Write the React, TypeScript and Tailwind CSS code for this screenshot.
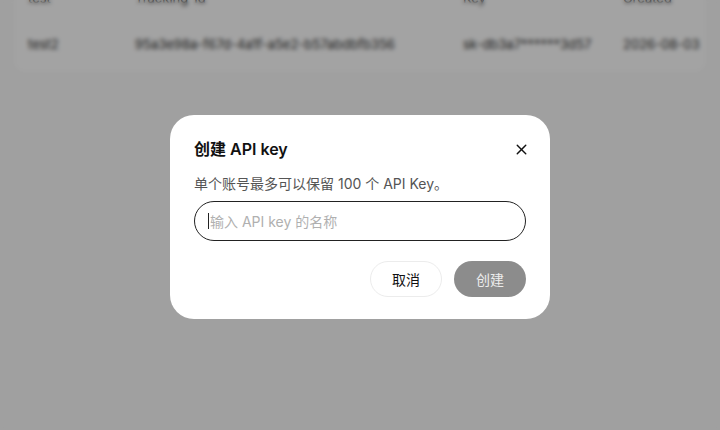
import React from 'react';
import { X } from 'lucide-react';

const ROWS = [
  { name: 'test', id: 'Tracking-Id', key: 'Key', date: 'Created' },
  { name: 'test2', id: '95a3e98a-f67d-4a1f-a5e2-b57abdbfb356', key: 'sk-db3a7******3d57', date: '2026-08-03' },
];

export default function App() {
  return (
    <div
      className="relative w-[720px] h-[430px] overflow-hidden bg-[#fafafa]"
      style={{ fontFamily: 'Inter, "Noto Sans CJK SC", sans-serif' }}
    >
      {/* Page behind the dialog (scrolled, first row partly off-screen) */}
      <div className="mx-[14px] -mt-[24px] rounded-xl bg-white pb-[4px]">
        {ROWS.map((r) => (
          <div key={r.name} className="flex items-center h-[46px] text-[13px] text-[#333]">
            <span className="w-[121px] pl-[14px]">{r.name}</span>
            <span className="w-[328px]">{r.id}</span>
            <span className="w-[160px]">{r.key}</span>
            <span>{r.date}</span>
          </div>
        ))}
      </div>

      {/* Overlay */}
      <div className="absolute inset-0 bg-black/[0.36] backdrop-blur-[2px] flex items-center justify-center">
        <div className="w-[380px] rounded-[24px] bg-white px-[24px] pt-[22px] pb-[22px] mt-[4px]">
          <div className="flex items-center justify-between">
            <h2 className="text-[16px] font-semibold text-[#111]">创建 API key</h2>
            <button className="w-[17px] h-[17px] flex items-center justify-center -mr-[4px] text-[#111]">
              <X className="w-[17px] h-[17px]" strokeWidth={2} />
            </button>
          </div>
          <p className="mt-[12px] text-[14px] text-[#555]">单个账号最多可以保留 100 个 API Key。</p>
          <div className="mt-[7px] h-[40px] rounded-full border border-[#222] flex items-center pl-[13px] pr-4">
            <span className="w-px h-[16px] bg-[#222] mr-px" />
            <span className="text-[14px] text-[#b0b0b0]">输入 API key 的名称</span>
          </div>
          <div className="mt-[20px] flex justify-end gap-[12px]">
            <button className="w-[72px] h-[36px] rounded-full border border-[#ececec] bg-white text-[14px] text-[#111]">
              取消
            </button>
            <button className="w-[72px] h-[36px] rounded-full bg-[#8c8c8c] text-[14px] text-[#ececec]">
              创建
            </button>
          </div>
        </div>
      </div>
    </div>
  );
}
